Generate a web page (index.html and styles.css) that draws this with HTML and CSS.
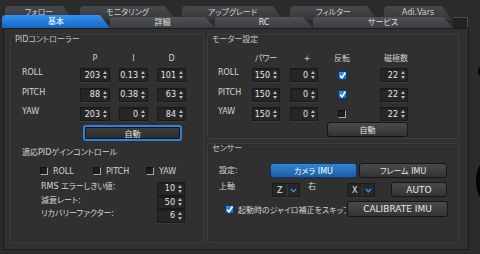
FILE: index.html
```html
<!DOCTYPE html>
<html>
<head>
<meta charset="utf-8">
<title>基本設定</title>
<link rel="stylesheet" href="styles.css">
</head>
<body>
<div class="window">
  <div class="main">
    <div class="tabs back">
      <div class="tab">フォロー</div>
      <div class="tab">モニタリング</div>
      <div class="tab">アップグレード</div>
      <div class="tab">フィルター</div>
      <div class="tab">Adi.Vars</div>
    </div>
    <div class="tabs front">
      <div class="tab active">基本</div>
      <div class="tab">詳細</div>
      <div class="tab">RC</div>
      <div class="tab">サービス</div>
      <div class="tab-end"></div>
    </div>

    <div class="panel">
      <!-- PID -->
      <div class="group pid">
        <div class="group-title">PIDコントローラー</div>
        <div class="pid-table">
          <div></div><div class="head">P</div><div class="head">I</div><div class="head">D</div>
          <div class="label">ROLL</div>
          <div class="spin">203<i class="arr"></i></div>
          <div class="spin">0.13<i class="arr"></i></div>
          <div class="spin">101<i class="arr"></i></div>
          <div class="label">PITCH</div>
          <div class="spin">88<i class="arr"></i></div>
          <div class="spin">0.38<i class="arr"></i></div>
          <div class="spin">63<i class="arr"></i></div>
          <div class="label">YAW</div>
          <div class="spin">203<i class="arr"></i></div>
          <div class="spin">0<i class="arr"></i></div>
          <div class="spin">84<i class="arr"></i></div>
        </div>
        <div class="btn focus pid-auto">自動</div>

        <div class="sub-title">適応PIDゲインコントロール</div>
        <div class="cb-row">
          <div class="cb-item"><span class="cb"></span>ROLL</div>
          <div class="cb-item"><span class="cb"></span>PITCH</div>
          <div class="cb-item"><span class="cb"></span>YAW</div>
        </div>
        <div class="adapt">
          <div class="label">RMS エラーしきい値:</div>
          <div class="spin">10<i class="arr"></i></div>
          <div class="label">減衰レート:</div>
          <div class="spin">50<i class="arr"></i></div>
          <div class="label">リカバリーファクター:</div>
          <div class="spin">6<i class="arr"></i></div>
        </div>
      </div>

      <!-- motors -->
      <div class="group motor">
        <div class="group-title">モーター設定</div>
        <div class="motor-table">
          <div></div><div class="head">パワー</div><div class="head plus">+</div><div class="head">反転</div><div class="head end">磁極数</div>
          <div class="label">ROLL</div>
          <div class="spin">150<i class="arr"></i></div>
          <div class="spin right">0<i class="arr"></i></div>
          <span class="cb checked"><svg viewBox="0 0 9 9" width="9" height="9"><path d="M2 4.5 L4 7 L7.5 1.5" fill="none" stroke="#fff" stroke-width="1.6"/></svg></span>
          <div class="spin right">22<i class="arr"></i></div>
          <div class="label">PITCH</div>
          <div class="spin">150<i class="arr"></i></div>
          <div class="spin right">0<i class="arr"></i></div>
          <span class="cb checked"><svg viewBox="0 0 9 9" width="9" height="9"><path d="M2 4.5 L4 7 L7.5 1.5" fill="none" stroke="#fff" stroke-width="1.6"/></svg></span>
          <div class="spin right">22<i class="arr"></i></div>
          <div class="label">YAW</div>
          <div class="spin">150<i class="arr"></i></div>
          <div class="spin right">0<i class="arr"></i></div>
          <span class="cb"></span>
          <div class="spin right">22<i class="arr"></i></div>
        </div>
        <div class="btn motor-auto">自動</div>
      </div>

      <!-- sensor -->
      <div class="group sensor">
        <div class="group-title">センサー</div>
        <div class="row row-mode">
          <div class="row-label">設定:</div>
          <div class="btn blue imu">カメラ IMU</div>
          <div class="btn imu frame">フレーム IMU</div>
        </div>
        <div class="row row-axis">
          <div class="row-label top">上軸</div>
          <div class="combo"><span class="cv">Z</span><span class="chev"><svg viewBox="0 0 7 5" width="7" height="5"><path d="M0.8 1 L3.5 3.8 L6.2 1" fill="none" stroke="#3d90ea" stroke-width="1.3"/></svg></span></div>
          <div class="row-label top side-label">右</div>
          <div class="combo"><span class="cv">X</span><span class="chev"><svg viewBox="0 0 7 5" width="7" height="5"><path d="M0.8 1 L3.5 3.8 L6.2 1" fill="none" stroke="#3d90ea" stroke-width="1.3"/></svg></span></div>
          <div class="btn auto">AUTO</div>
        </div>
        <div class="row row-cal">
          <span class="cb checked"><svg viewBox="0 0 9 9" width="9" height="9"><path d="M2 4.5 L4 7 L7.5 1.5" fill="none" stroke="#fff" stroke-width="1.6"/></svg></span>
          <div class="skip">起動時のジャイロ補正をスキップ</div>
          <div class="btn cal">CALIBRATE IMU</div>
        </div>
      </div>
    </div>
  </div>
  <div class="side">
    <svg viewBox="0 0 9 254" width="9" height="254">
      <ellipse cx="14" cy="71" rx="7" ry="7" fill="#050505"/>
      <ellipse cx="20" cy="181" rx="15" ry="24" fill="#050505"/>
    </svg>
  </div>
</div>
</body>
</html>
```

FILE: styles.css
```css
body {
	margin: 0;
	background: #2b2b2b;
	font-family: "DejaVu Sans", "Noto Sans CJK JP", sans-serif;
	font-size: 8px;
	color: #d4d4d4;
	font-feature-settings: "palt";
}

.window {
	display: flex;
	width: 480px;
	height: 254px;
	overflow: hidden;
}

.main {
	width: 471px;
	display: flex;
	flex-direction: column;
}

.side {
	width: 9px;
}

/* tabs */
.tabs {
	display: flex;
}

.tab {
	text-align: center;
	white-space: nowrap;
	border-top-left-radius: 4px;
	clip-path: polygon(0 0, calc(100% - 10px) 0, 100% 100%, 0 100%);
}

.back {
	margin-top: 6px;
	height: 14px;
	padding-left: 5px;
	gap: 7px;
}

.back .tab {
	line-height: 14px;
	color: #cfcfcf;
	background: linear-gradient(#47494d, #35373b);
}

.back .tab:nth-child(1) { width: 68px; }
.back .tab:nth-child(2) { width: 95px; }
.back .tab:nth-child(3) { width: 101px; }
.back .tab:nth-child(4) { width: 87px; }
.back .tab:nth-child(5) { width: 68px; }

.front {
	margin-top: -5px;
	height: 13px;
	padding-left: 2px;
	align-items: flex-end;
}

.front .tab {
	height: 11px;
	line-height: 12px;
	color: #e2e2e2;
	background: linear-gradient(#4f5156, #3b3d41);
}

.front .tab:nth-child(1) { width: 108px; }
.front .tab:nth-child(2) { width: 105px; }
.front .tab:nth-child(3) { width: 98px; }
.front .tab:nth-child(4) { width: 140px; }

.front .tab.active {
	height: 13px;
	line-height: 14px;
	color: #fff;
	background: linear-gradient(#3393f2, #1665c2);
}

.tab-end {
	width: 14px;
	height: 10px;
	background: #222;
	border-top: 1px solid #4a4a4a;
	border-right: 1px solid #4a4a4a;
}

/* panel */
.panel {
	margin-left: 3px;
	width: 466px;
	height: 220px;
	border: 1px solid #1b1b1b;
	background: #303030;
	padding: 5px 11px 6px 6px;
	box-sizing: border-box;
	height: 222px;
	display: grid;
	grid-template-columns: 194px 252px;
	grid-template-rows: 105px 100px;
	column-gap: 3px;
	row-gap: 4px;
}

.group {
	border: 1px solid #3e3e3e;
	border-radius: 3px;
	padding: 0 4px;
	box-shadow: inset 0 0 0 1px #2c2c2c;
}

.pid {
	grid-row: 1 / 3;
}

.group-title {
	line-height: 10px;
	color: #c4c4c4;
}

.label {
	align-self: start;
	line-height: 9px;
	white-space: nowrap;
}

.head {
	text-align: center;
	line-height: 8px;
	color: #cfcfcf;
}

/* spin boxes */
.spin {
	display: flex;
	justify-content: flex-end;
	align-items: center;
	height: 14px;
	box-sizing: border-box;
	background: #262626;
	border: 1px solid #1a1a1a;
	box-shadow: inset 0 1px 0 #1f1f1f, 0 1px 0 #3a3a3a;
	color: #e6e6e6;
	font-style: normal;
}

.arr {
	display: flex;
	flex-direction: column;
	gap: 2px;
	margin: 0 2px 0 3px;
}

.arr::before,
.arr::after {
	content: "";
	border-left: 2px solid transparent;
	border-right: 2px solid transparent;
}

.arr::before {
	border-bottom: 3px solid #b8b8b8;
}

.arr::after {
	border-top: 3px solid #b8b8b8;
}

.pid-table {
	display: grid;
	grid-template-columns: 49px 30px 29px 29px;
	grid-template-rows: 8px 14px 14px 14px;
	column-gap: 9px;
	row-gap: 5.5px;
	align-items: center;
	margin: 9.5px 0 0 7px;
}

/* buttons */
.btn {
	display: flex;
	justify-content: center;
	align-items: center;
	box-sizing: border-box;
	border: 1px solid #151515;
	border-radius: 3px;
	background: linear-gradient(#4a4a4a, #333);
	color: #e8e8e8;
	white-space: nowrap;
}

.btn.blue {
	background: linear-gradient(#3384d4, #1b5ea6);
	border-color: #0e3763;
	color: #fff;
}

.btn.focus {
	border: 2px solid #2f82dc;
	background: linear-gradient(#3e3e3e, #2c2c2c);
	box-shadow: inset 0 0 0 1px #151515;
}

.pid-auto {
	margin: 4px 0 0 68px;
	width: 99px;
	height: 16px;
}

.sub-title {
	margin: 7px 0 0 7px;
	line-height: 10px;
}

/* checkboxes */
.cb {
	display: block;
	width: 8px;
	height: 8px;
	background: #1d1d1d;
	border-right: 1px solid #a8a8a8;
	border-bottom: 1px solid #a8a8a8;
	border-top: 1px solid #111;
	border-left: 1px solid #111;
	box-sizing: border-box;
}

.cb.checked {
	width: 9px;
	height: 9px;
	border: 1px solid #0d3a6a;
	background: linear-gradient(#3a93ee, #1662bf);
}

.cb.checked svg {
	display: block;
	margin: -1px;
}

.cb-row {
	display: flex;
	margin: 8px 0 0 25px;
	height: 10px;
}

.cb-item {
	display: flex;
	align-items: center;
	gap: 5px;
	width: 57px;
}

.adapt {
	display: grid;
	grid-template-columns: 116px 28px;
	grid-template-rows: 13.5px 13.5px 13.5px;
	margin: 6px 0 0 26px;
}

.adapt .spin {
	height: 13.5px;
}

/* motors */
.motor-table {
	display: grid;
	grid-template-columns: 34px 28px 38px 48px 42px;
	grid-template-rows: 8px 14px 14px 14px;
	row-gap: 5.5px;
	align-items: center;
	margin: 9.5px 0 0 6px;
}

.motor-table .spin {
	width: 28px;
}

.motor-table .right {
	justify-self: end;
}

.motor-table .cb {
	justify-self: center;
}

.head.plus {
	padding-left: 16px;
}

.head.end {
	justify-self: end;
}

.motor-auto {
	margin: 1px 0 0 115px;
	width: 81px;
	height: 15px;
}

/* sensor */
.row {
	display: flex;
	align-items: center;
}

.row-label {
	margin-left: 7px;
	width: 51px;
	line-height: 10px;
}

.row-label.top {
	align-self: flex-start;
	width: 53px;
}

.row-label.side-label {
	margin-left: 0;
	padding-left: 8px;
	width: 39px;
}

.row-mode {
	margin-top: 9px;
	height: 15px;
}

.imu {
	width: 87px;
	height: 15px;
}

.frame {
	width: 88px;
	margin-left: 2px;
}

.row-axis {
	margin-top: 4px;
	height: 15px;
}

.combo {
	display: flex;
	align-items: center;
	width: 28px;
	height: 14px;
	box-sizing: border-box;
	margin-top: 1px;
	background: #262626;
	border: 1px solid #1a1a1a;
	box-shadow: 0 1px 0 #3a3a3a;
}

.cv {
	width: 14px;
	padding-left: 4px;
	box-sizing: border-box;
	color: #e6e6e6;
}

.chev {
	display: flex;
	align-items: center;
	justify-content: center;
	flex: 1;
	height: 100%;
	border-left: 1px solid #3a3a3a;
}

.auto {
	margin-left: 16px;
	width: 56px;
	height: 15px;
	font-size: 9px;
}

.row-cal {
	margin-top: 4px;
	height: 16px;
}

.row-cal .cb {
	margin-left: 13px;
}

.skip {
	margin-left: 4px;
	width: 108px;
	overflow: hidden;
	white-space: nowrap;
}

.cal {
	margin-left: 1px;
	width: 101px;
	height: 16px;
	font-size: 9px;
}
```
